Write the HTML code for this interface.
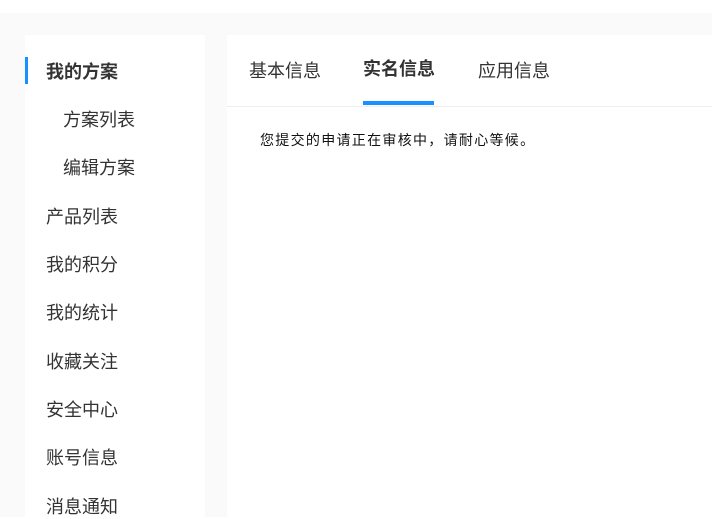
<!DOCTYPE html>
<html><head><meta charset="utf-8"><style>
*{margin:0;padding:0;box-sizing:border-box}
body{width:712px;height:517px;overflow:hidden;background:#fff;font-family:"Liberation Sans","Noto Sans CJK SC",sans-serif;color:#333;position:relative}
.bg{position:absolute;left:0;top:13px;width:712px;height:504px;background:#fafafa}
.side{position:absolute;left:25px;top:35px;width:180px;height:482px;background:#fff}
.main{position:absolute;left:227px;top:35px;width:485px;height:482px;background:#fff}
.it{position:absolute;left:21px;font-size:18px;line-height:24px;white-space:nowrap}
.sub{left:38px}
.bar{position:absolute;left:0;top:22px;width:3px;height:27px;background:#1890ff}
.tab{position:absolute;top:24px;font-size:18px;line-height:24px;white-space:nowrap}
.line{position:absolute;left:0;top:71px;width:485px;height:1px;background:#eee}
.ul{position:absolute;left:136px;top:66px;width:71px;height:4px;background:#1890ff}
.msg{position:absolute;left:33px;top:96px;font-size:14px;line-height:18px;color:#111;white-space:nowrap;letter-spacing:1.3px}
</style></head><body>
<div class="bg"></div>
<div class="side">
<div class="bar"></div>
<div class="it" style="top:25px;font-weight:bold">我的方案</div>
<div class="it sub" style="top:73px">方案列表</div>
<div class="it sub" style="top:121px">编辑方案</div>
<div class="it" style="top:170px">产品列表</div>
<div class="it" style="top:218px">我的积分</div>
<div class="it" style="top:266px">我的统计</div>
<div class="it" style="top:315px">收藏关注</div>
<div class="it" style="top:363px">安全中心</div>
<div class="it" style="top:411px">账号信息</div>
<div class="it" style="top:460px">消息通知</div>
</div>
<div class="main">
<div class="tab" style="left:22px">基本信息</div>
<div class="tab" style="left:136px;top:22px;font-weight:bold">实名信息</div>
<div class="tab" style="left:251px">应用信息</div>
<div class="line"></div>
<div class="ul"></div>
<div class="msg">您提交的申请正在审核中，请耐心等候。</div>
</div>
</body></html>
